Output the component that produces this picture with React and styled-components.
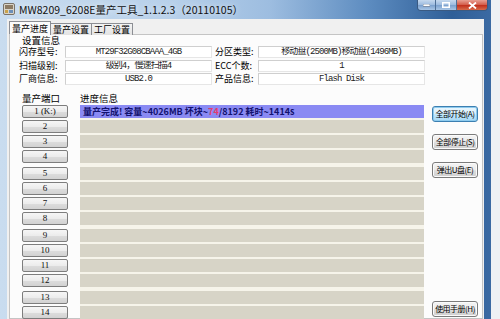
import React from 'react';
import styled, { createGlobalStyle } from 'styled-components';

const Global = createGlobalStyle`
  html, body { margin: 0; padding: 0; background: #f3f5f7; }
  body { width: 500px; height: 319px; overflow: hidden; font-family: "Noto Sans CJK SC", "Noto Sans", sans-serif; }
`;

const Screen = styled.div`
  width: 500px;
  height: 319px;
  overflow: hidden;
  display: flex;
  background: #eef1f4;
`;

const Window = styled.div`
  width: 491px;
  height: 319px;
  display: flex;
  flex-direction: column;
  background: linear-gradient(90deg, #c9dcef 0%, #b7d0ea 35%, #9dbde0 55%, #5d8cc0 75%, #2f5f98 92%, #3b6aa3 100%);
`;

const TitleBar = styled.div`
  height: 19px;
  display: flex;
  align-items: flex-start;
  flex-shrink: 0;
`;

const AppIcon = styled.div`
  width: 12px;
  height: 12px;
  margin: 3px 0 0 3px;
  display: flex;
`;

const Title = styled.div`
  margin-left: 4px;
  line-height: 19px;
  font-size: 10.5px;
  color: #111;
  white-space: nowrap;
  text-shadow: 0 0 6px rgba(255,255,255,0.9);
`;

const Controls = styled.div`
  margin-left: auto;
  margin-right: 3px;
  display: flex;
  height: 10px;
  border: 1px solid #3a5a82;
  border-top: none;
  border-radius: 0 0 4px 4px;
  overflow: hidden;
`;

const CtrlButton = styled.div`
  width: ${p => p.$w}px;
  height: 10px;
  display: flex;
  align-items: center;
  justify-content: center;
  background: ${p => p.$close
    ? 'linear-gradient(#e8a093 0%, #d4614f 45%, #c2321f 55%, #d66a4a 100%)'
    : 'linear-gradient(#c6d9ee 0%, #9fbde0 45%, #7ea3cf 55%, #a9c6e6 100%)'};
  border-left: ${p => p.$first ? 'none' : '1px solid #4e6f96'};
`;

const Client = styled.div`
  flex: 1;
  margin: 0 7px;
  background: #f0f0f0;
  display: flex;
  flex-direction: column;
  padding: 2px 1px 0 2px;
  min-height: 0;
`;

const Tabs = styled.div`
  display: flex;
  height: 14px;
  align-items: flex-end;
  position: relative;
  z-index: 1;
`;

const Tab = styled.div`
  height: ${p => p.$active ? 14 : 12}px;
  padding: 0 2px;
  font-size: 9px;
  line-height: ${p => p.$active ? 13 : 11}px;
  color: #000;
  border: 1px solid #8c8e94;
  border-bottom: ${p => p.$active ? '1px solid #fcfcfc' : 'none'};
  margin-left: ${p => p.$first ? 0 : -1}px;
  background: ${p => p.$active ? '#fcfcfc' : 'linear-gradient(#f3f3f3, #e3e3e3)'};
  box-sizing: border-box;
  white-space: nowrap;
`;

const Panel = styled.div`
  flex: 1;
  margin-top: -1px;
  background: #fcfcfc;
  border: 1px solid #c4c4c4;
  padding: 0 0 0 12px;
  display: flex;
  flex-direction: column;
  min-height: 0;
`;

const GroupTitle = styled.div`
  height: 11px;
  font-size: 9.5px;
  line-height: 11px;
  color: #000;
`;

const InfoGrid = styled.div`
  margin-left: -3px;
  display: grid;
  grid-template-columns: 46px 147px 46px 167px;
  grid-auto-rows: 12px;
  row-gap: 1.5px;
`;

const Label = styled.div`
  font-size: 9px;
  line-height: 12px;
  color: #000;
  white-space: nowrap;
  padding-left: ${p => p.$indent || 0}px;
`;

const Field = styled.div`
  box-sizing: border-box;
  border: 1px solid #cfcfcf;
  border-right-color: #e6e6e6;
  border-bottom-color: #e6e6e6;
  background: #fff;
  text-align: center;
  font-family: "Liberation Mono", "Noto Sans CJK SC", monospace;
  font-size: 9px;
  letter-spacing: -0.9px;
  line-height: 10px;
  color: #222;
  white-space: nowrap;
  overflow: hidden;
`;

const Lower = styled.div`
  display: flex;
  margin-top: 7px;
`;

const Column = styled.div`
  width: ${p => p.$w}px;
  margin-left: ${p => p.$ml || 0}px;
  display: flex;
  flex-direction: column;
`;

const ColumnHeader = styled.div`
  height: 13px;
  font-size: 9.5px;
  line-height: 13px;
  color: #000;
  white-space: nowrap;
`;

const Stack = styled.div`
  display: flex;
  flex-direction: column;
  gap: ${p => p.$gap}px;
  background: ${p => p.$bg || 'transparent'};
`;

const PortButton = styled.div`
  box-sizing: border-box;
  height: 13px;
  border: 1px solid #7d7d7d;
  border-radius: 2px;
  background: linear-gradient(#f6f6f6 0%, #ececec 50%, #dcdcdc 55%, #d2d2d2 100%);
  font-family: "Liberation Serif", "Noto Sans CJK SC", serif;
  font-size: 9px;
  line-height: 11px;
  text-align: center;
  color: #111;
`;

const ProgressRow = styled.div`
  height: 13px;
  background: ${p => p.$done ? '#8a8af3' : '#d7d4c7'};
  font-size: 9px;
  font-weight: bold;
  line-height: 13px;
  color: #12126e;
  padding-left: 3px;
  white-space: nowrap;
`;

const Bad = styled.span`
  color: #e33b6d;
`;

const ActionButton = styled.div`
  box-sizing: border-box;
  height: 16px;
  margin-top: ${p => p.$mt}px;
  border: 1px solid ${p => p.$default ? '#3c7fb1' : '#7b7b7b'};
  border-radius: 3px;
  background: ${p => p.$default
    ? 'linear-gradient(#eaf6fd 0%, #d9f0fc 50%, #bee6fd 55%, #a7d9f5 100%)'
    : 'linear-gradient(#f4f4f4 0%, #ebebeb 50%, #dddddd 55%, #cfcfcf 100%)'};
  box-shadow: ${p => p.$default ? 'inset 0 0 0 1px #8ecbee' : 'inset 0 0 0 1px #fbfbfb'};
  font-size: 8px;
  line-height: 14px;
  text-align: center;
  color: #000;
  white-space: nowrap;
  letter-spacing: -0.5px;
`;

const infoRows = [
  ['闪存型号:', 'MT29F32G08CBAAA_4GB', '分区类型:', '移动盘(2500MB)移动盘(1496MB)'],
  ['扫描级别:', '级别4，慢速扫描4', 'ECC个数:', '1'],
  ['厂商信息:', 'USB2.0', '产品信息:', 'Flash Disk'],
];

const groups = [
  ['1 (K:)', '2', '3', '4'],
  ['5', '6', '7', '8'],
  ['9', '10', '11', '12'],
  ['13', '14', '15', '16'],
];

function AppGlyph() {
  return (
    <svg width="12" height="12" viewBox="0 0 12 12">
      <rect x="0.5" y="0.5" width="11" height="11" rx="1.5" fill="#d9d4c8" stroke="#7a7268" />
      <rect x="2" y="2" width="8" height="4" fill="#8c7a62" />
      <rect x="2" y="7" width="3" height="3" fill="#c9a24b" />
      <rect x="6" y="7" width="4" height="3" fill="#6c8fb8" />
    </svg>
  );
}

export default function App() {
  return (
    <Screen>
      <Global />
      <Window>
        <TitleBar>
          <AppIcon><AppGlyph /></AppIcon>
          <Title>MW8209_6208E量产工具_1.1.2.3（20110105）</Title>
          <Controls>
            <CtrlButton $w={17} $first>
              <svg width="7" height="3" viewBox="0 0 7 3"><rect x="0" y="0" width="7" height="2.5" fill="#fff" stroke="#3a4f6b" strokeWidth="0.5" /></svg>
            </CtrlButton>
            <CtrlButton $w={20}>
              <svg width="8" height="6" viewBox="0 0 8 6"><rect x="0.75" y="0.75" width="6.5" height="4.5" fill="none" stroke="#fff" strokeWidth="1.5" /></svg>
            </CtrlButton>
            <CtrlButton $w={30} $close>
              <svg width="9" height="7" viewBox="0 0 9 7"><path d="M1 0.5 L8 6.5 M8 0.5 L1 6.5" stroke="#fff" strokeWidth="1.8" /></svg>
            </CtrlButton>
          </Controls>
        </TitleBar>
        <Client>
          <Tabs>
            <Tab $active $first>量产进度</Tab>
            <Tab>量产设置</Tab>
            <Tab>工厂设置</Tab>
          </Tabs>
          <Panel>
            <GroupTitle>设置信息</GroupTitle>
            <InfoGrid>
              {infoRows.map((r, i) => (
                <React.Fragment key={i}>
                  <Label>{r[0]}</Label>
                  <Field>{r[1]}</Field>
                  <Label $indent={3}>{r[2]}</Label>
                  <Field>{r[3]}</Field>
                </React.Fragment>
              ))}
            </InfoGrid>
            <Lower>
              <Column $w={46}>
                <ColumnHeader>量产端口</ColumnHeader>
                <Stack $gap={4}>
                  {groups.map((g, gi) => (
                    <Stack $gap={2} key={gi}>
                      {g.map(n => <PortButton key={n}>{n}</PortButton>)}
                    </Stack>
                  ))}
                </Stack>
              </Column>
              <Column $w={344} $ml={12}>
                <ColumnHeader>进度信息</ColumnHeader>
                <Stack $gap={4} $bg="#f6f4ea">
                  {groups.map((g, gi) => (
                    <Stack $gap={2} key={gi}>
                      {g.map((n, ni) => (
                        <ProgressRow key={n} $done={gi === 0 && ni === 0}>
                          {gi === 0 && ni === 0 ? (
                            <>量产完成! 容量~4026MB 坏块~<Bad>74</Bad>/8192  耗时~1414s</>
                          ) : null}
                        </ProgressRow>
                      ))}
                    </Stack>
                  ))}
                </Stack>
              </Column>
              <Column $w={46} $ml={8}>
                <ActionButton $mt={14} $default>全部开始(A)</ActionButton>
                <ActionButton $mt={12}>全部停止(S)</ActionButton>
                <ActionButton $mt={12}>弹出U盘(E)</ActionButton>
                <ActionButton $mt={123}>使用手册(H)</ActionButton>
              </Column>
            </Lower>
          </Panel>
        </Client>
      </Window>
    </Screen>
  );
}
